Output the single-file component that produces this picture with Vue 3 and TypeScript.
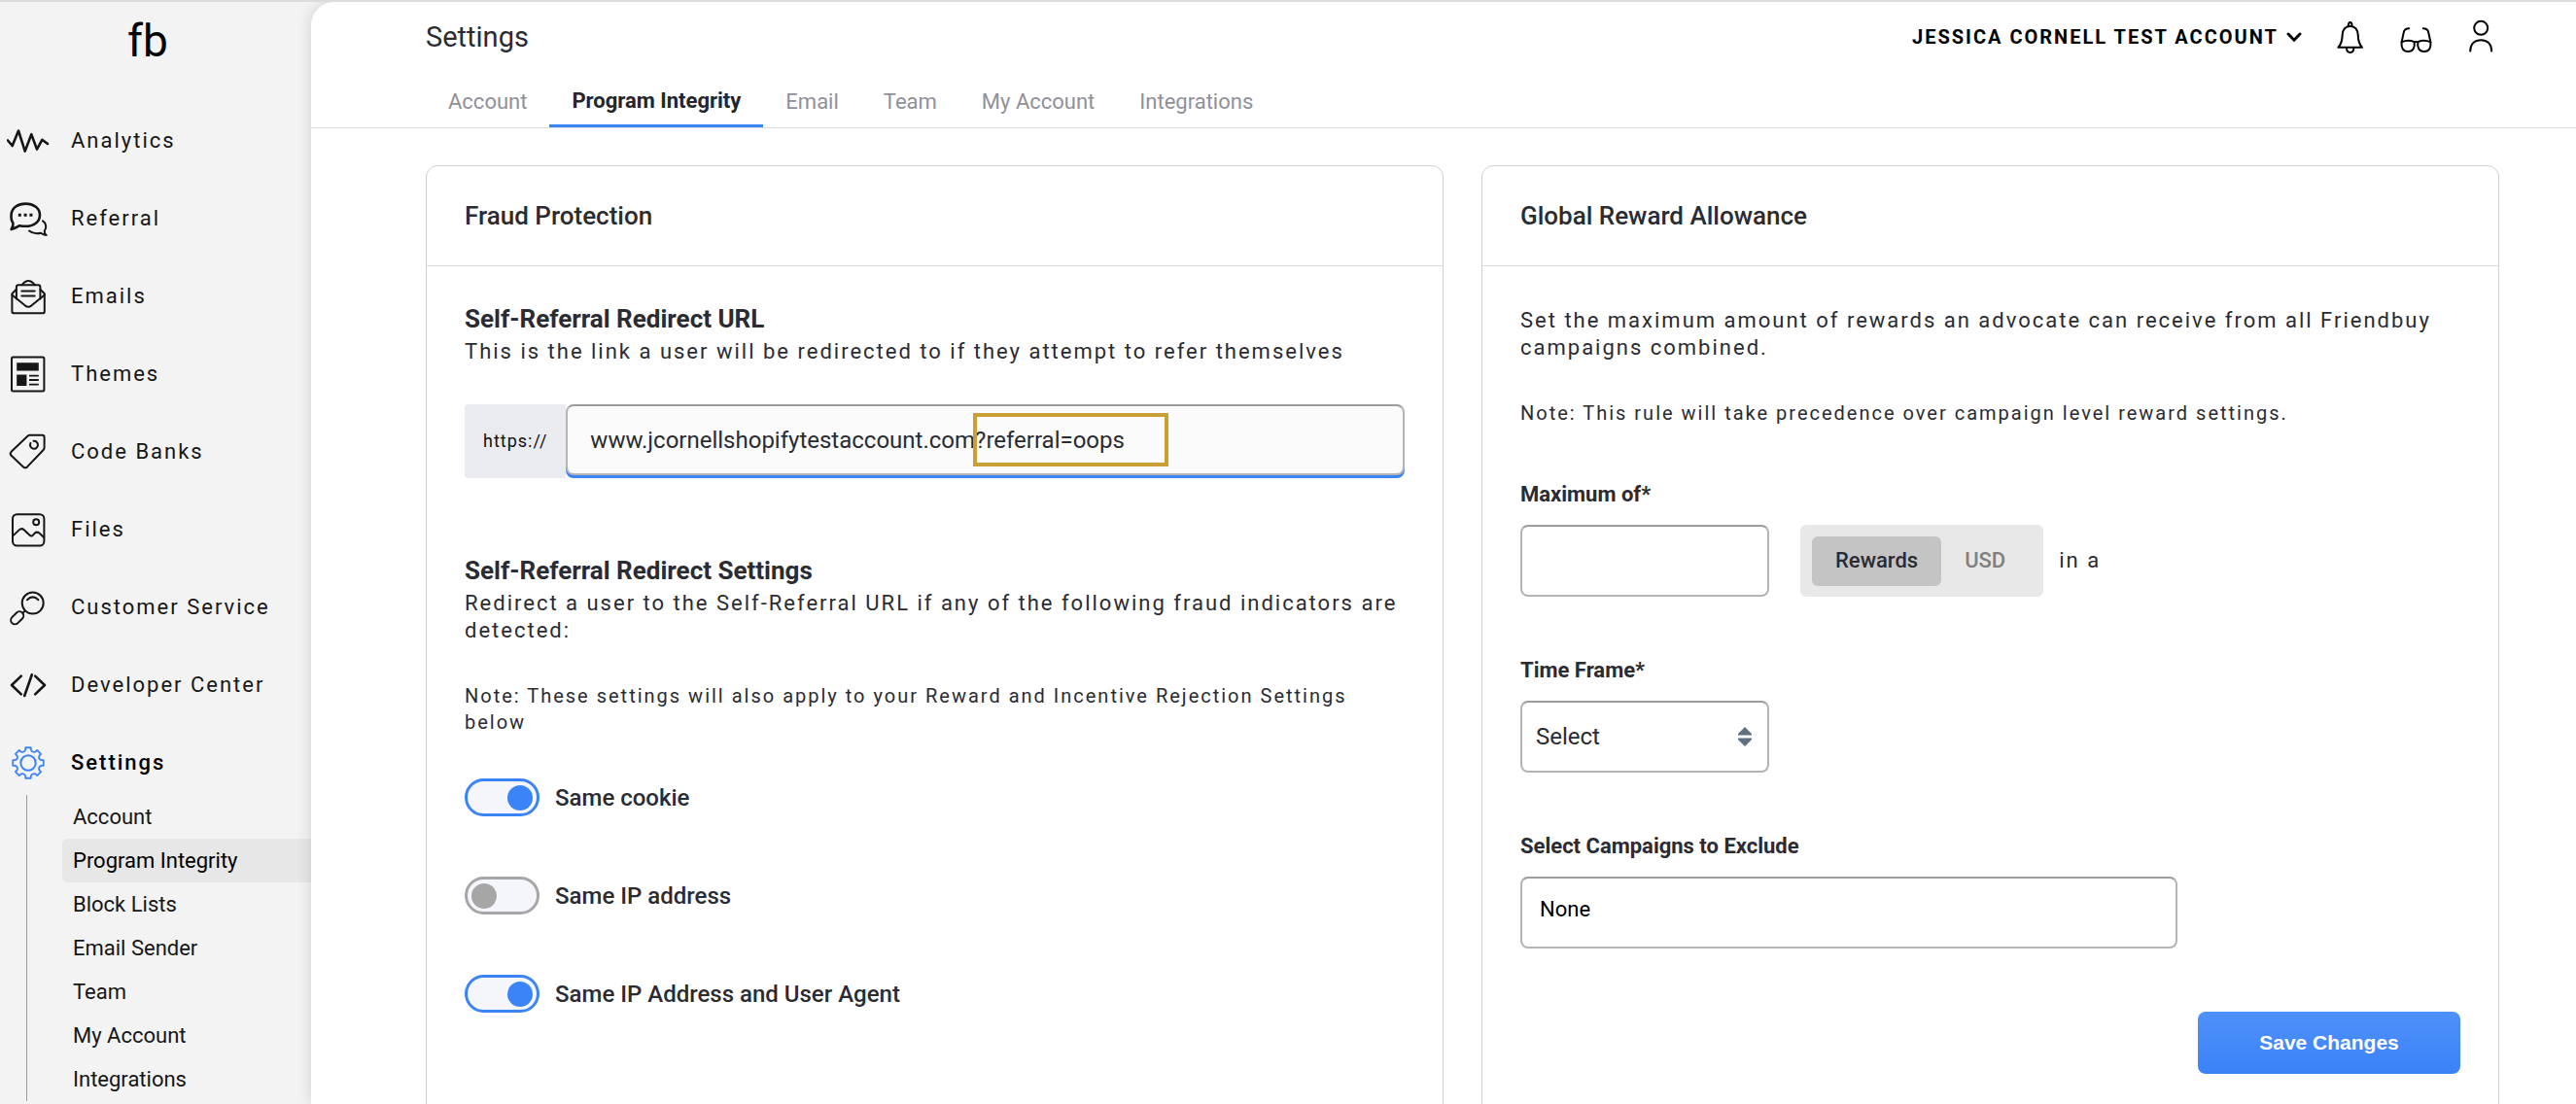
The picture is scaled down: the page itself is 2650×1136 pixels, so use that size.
<script setup lang="ts">
import { ref } from 'vue'

interface NavItem {
  label: string
  icon: string
}

const navItems: NavItem[] = [
  { label: 'Analytics', icon: 'analytics' },
  { label: 'Referral', icon: 'referral' },
  { label: 'Emails', icon: 'emails' },
  { label: 'Themes', icon: 'themes' },
  { label: 'Code Banks', icon: 'tag' },
  { label: 'Files', icon: 'files' },
  { label: 'Customer Service', icon: 'search' },
  { label: 'Developer Center', icon: 'code' },
  { label: 'Settings', icon: 'gear' },
]

const subItems: string[] = ['Account', 'Program Integrity', 'Block Lists', 'Email Sender', 'Team', 'My Account', 'Integrations']
const tabs: string[] = ['Account', 'Program Integrity', 'Email', 'Team', 'My Account', 'Integrations']
const activePage = 'Program Integrity'

const redirectUrl = ref('www.jcornellshopifytestaccount.com?referral=oops')
const maximum = ref('')
const unit = ref('Rewards')
const timeFrame = ref('')
const excluded = ref('None')
const indicators = ref([
  { id: 'cookie', label: 'Same cookie', on: true },
  { id: 'ip', label: 'Same IP address', on: false },
  { id: 'agent', label: 'Same IP Address and User Agent', on: true },
])

// Outline of the eight-toothed settings gear, centred on 22,22
function gearOutline(): string {
  const at = (deg: number, r: number): string => {
    const a = (deg * Math.PI) / 180
    return `${(22 + r * Math.cos(a)).toFixed(2)} ${(22 + r * Math.sin(a)).toFixed(2)}`
  }
  let d = ''
  for (let i = 0; i < 8; i++) {
    const c = i * 45
    d += `${i === 0 ? 'M' : 'L'}${at(c - 10, 16)}L${at(c + 10, 16)}L${at(c + 12, 13.6)}Q${at(c + 22.5, 11)} ${at(c + 33, 13.6)}`
  }
  return d + 'Z'
}
const gearPath = gearOutline()
</script>

<template>
  <div class="app">
    <aside class="sidebar">
      <a class="logo" href="#">fb</a>
      <nav>
        <ul class="nav">
          <li v-for="item in navItems" :key="item.label">
            <a class="nav-link" :class="{ current: item.icon === 'gear' }" href="#">
              <svg class="icon" viewBox="0 0 44 44" aria-hidden="true">
                <path v-if="item.icon === 'analytics'" stroke-width="2.6" d="M1 21.5 5.7 27 12 11.5 18.7 32.6 25.3 15.2 31 30.6 36.3 20.8 42 25" />
                <template v-else-if="item.icon === 'referral'">
                  <path stroke-width="2.6" d="M4.6 33 C6.4 30.6 6.8 28.6 6.4 26.6 C4.8 24.4 4.2 21.4 4.6 17.6 C5.2 10.6 11.6 6.6 19.2 6.6 C27.6 6.6 34 11.2 34 18.2 C34 25.4 27.6 29.8 19.2 29.8 C17 29.8 15 29.6 13.2 29.2 C10.6 30.8 8 32.2 4.6 33 Z" />
                  <path stroke-width="2" d="M37 24.4 C41 27 41 31.6 38.8 34.4 C38.6 36.6 39.4 38 40.8 39 C38.4 38.8 36.6 38 35 36.8 C30.6 37.8 26 37.2 23 34.6" />
                  <path stroke-width="3" stroke-linecap="butt" d="M11.8 18.2h3M17.6 18.2h3M23.4 18.2h3" />
                </template>
                <template v-else-if="item.icon === 'emails'">
                  <path d="M9.7 14.8 5.4 19.2V37.4Q5.4 39.2 7.2 39.2H37Q38.8 39.2 38.8 37.4V19.2L34.4 14.8" />
                  <path d="M9.9 24.4V12.4Q9.9 10.3 12 10.3H32.3Q34.4 10.3 34.4 12.4V24.4" />
                  <path d="M5.4 20.4 19 31.6Q22.1 33.8 25.2 31.6L38.8 20.4" />
                  <path d="M15.6 10.2Q22.1 2 28.8 10.2M15.3 16.6H28.7M15.3 21.6H28.7" />
                </template>
                <template v-else-if="item.icon === 'themes'">
                  <rect x="5" y="4.6" width="33.4" height="34.8" rx="1.5" />
                  <path class="solid" d="M10.2 10.2H32.8V18.6H10.2ZM10.2 22.4H20.4V34H10.2Z" />
                  <path stroke-linecap="butt" stroke-width="1.8" d="M23 23.6H32.8M23 28H32.8M23 32.6H32.8" />
                </template>
                <template v-else-if="item.icon === 'tag'">
                  <path d="M23.6 4.8H36.4Q38.6 4.8 38.6 7V17.6Q38.6 19 37.6 20L21 37.4Q19 39.2 17 37.4L4.6 25.8Q2.8 23.8 4.6 21.8L21.4 5.8Q22.4 4.8 23.6 4.8Z" />
                  <path d="M27.6 10.8A4 4 0 1 1 24.4 13" />
                </template>
                <template v-else-if="item.icon === 'files'">
                  <rect x="6" y="6.2" width="32.4" height="32.4" rx="4.5" />
                  <circle cx="30.2" cy="14.2" r="3" />
                  <path d="M6.3 28.4 12.6 22.4Q15.2 20 17.8 22.2L23.6 27.8Q25.4 29.6 27.4 27.2L28.6 25.8Q31 23.6 33.4 25.6L38.2 30" />
                </template>
                <template v-else-if="item.icon === 'search'">
                  <circle cx="26.7" cy="17.6" r="11" />
                  <path d="M21 14.2Q26.7 8.6 32.4 14.2M18.6 25.6 16.8 27.4" />
                  <rect x="3.2" y="28.6" width="15" height="8.4" rx="4.2" transform="rotate(-45 10.7 32.8)" />
                </template>
                <path v-else-if="item.icon === 'code'" stroke-width="2.6" d="M14.8 12.6 5 22 14.8 31.4M25.8 11.2 18.2 33M29.2 12.6 39 22 29.2 31.4" />
                <template v-else>
                  <path stroke-width="1.8" :d="gearPath" />
                  <circle cx="22" cy="22" r="7.7" />
                </template>
              </svg>
              <span>{{ item.label }}</span>
            </a>
          </li>
        </ul>
        <ul class="subnav">
          <li v-for="sub in subItems" :key="sub">
            <a class="sub-link" :class="{ selected: sub === activePage }" href="#">{{ sub }}</a>
          </li>
        </ul>
      </nav>
    </aside>

    <main class="main">
      <header class="header">
        <div class="topline">
          <h1>Settings</h1>
          <div class="tools">
            <button class="account" type="button">
              JESSICA CORNELL TEST ACCOUNT
              <svg class="chevron" viewBox="0 0 16 12" aria-hidden="true"><path d="M2 3 8 9.2 14 3" /></svg>
            </button>
            <button class="tool" type="button" aria-label="Notifications">
              <svg class="icon" viewBox="0 0 44 44" aria-hidden="true">
                <path d="M11.4 32.8C14.6 29.4 15.4 26.4 15.6 20.6C15.8 14.4 18.4 11 23.7 11C29 11 31.6 14.4 31.8 20.6C32 26.4 32.8 29.4 36 32.8Z" />
                <path d="M21.8 10.8C21.8 5.6 25.6 5.6 25.6 10.8M20 33C20 39.6 27.4 39.6 27.4 33" />
              </svg>
            </button>
            <button class="tool" type="button" aria-label="Preview">
              <svg class="icon" viewBox="0 0 44 44" aria-hidden="true">
                <path d="M8.6 27.4C12.6 25.6 17.6 25.4 21.6 27.2C22.6 32.8 20.4 37 15.2 37C9.8 37 8 32.8 8.6 27.4ZM25.4 27.2C29.4 25.4 34.4 25.6 38.4 27.4C39 32.8 37.2 37 31.8 37C26.6 37 24.4 32.8 25.4 27.2ZM21.6 27.4Q23.5 26.4 25.4 27.4" />
                <path d="M8.6 27.4 11 16.4Q12 13.4 16.2 13.2M38.4 27.4 36 16.4Q35 13.4 30.8 13.2" />
              </svg>
            </button>
            <button class="tool" type="button" aria-label="Profile">
              <svg class="icon" viewBox="0 0 44 44" aria-hidden="true">
                <circle cx="22.2" cy="12.8" r="7" />
                <path d="M11.2 36.6C11.4 29 16 25.2 22.2 25.2C28.4 25.2 33 29 33.2 36.6" />
              </svg>
            </button>
          </div>
        </div>
        <nav class="tabs">
          <a v-for="tab in tabs" :key="tab" class="tab" :class="{ active: tab === activePage }" href="#">{{ tab }}</a>
        </nav>
      </header>

      <div class="cards">
        <section class="card">
          <h2 class="card-title">Fraud Protection</h2>
          <div class="card-body">
            <h3><label for="redirect-url">Self-Referral Redirect URL</label></h3>
            <p class="text">This is the link a user will be redirected to if they attempt to refer themselves</p>
            <div class="url-row">
              <span class="prefix">https://</span>
              <div class="url-box">
                <input id="redirect-url" v-model="redirectUrl" class="field url" type="text" />
                <span class="marker"></span>
              </div>
            </div>
            <h3>Self-Referral Redirect Settings</h3>
            <p class="text">Redirect a user to the Self-Referral URL if any of the following fraud indicators are detected:</p>
            <p class="note">Note: These settings will also apply to your Reward and Incentive Rejection Settings below</p>
            <div class="toggles">
              <label v-for="row in indicators" :key="row.id" class="toggle">
                <input v-model="row.on" type="checkbox" role="switch" />
                <span>{{ row.label }}</span>
              </label>
            </div>
          </div>
        </section>

        <section class="card">
          <h2 class="card-title">Global Reward Allowance</h2>
          <form class="card-body" @submit.prevent>
            <p class="text">Set the maximum amount of rewards an advocate can receive from all Friendbuy campaigns combined.</p>
            <p class="note">Note: This rule will take precedence over campaign level reward settings.</p>
            <div class="group">
              <label class="label" for="maximum">Maximum of*</label>
              <div class="limit">
                <input id="maximum" v-model="maximum" class="field short" type="text" />
                <div class="units">
                  <button v-for="u in ['Rewards', 'USD']" :key="u" type="button" class="unit" :class="{ on: unit === u }" @click="unit = u">{{ u }}</button>
                </div>
                <span class="text">in a</span>
              </div>
            </div>
            <div class="group">
              <label class="label" for="time-frame">Time Frame*</label>
              <div class="select-box">
                <select id="time-frame" v-model="timeFrame" class="field short">
                  <option value="">Select</option>
                  <option value="day">Day</option>
                  <option value="month">Month</option>
                  <option value="year">Year</option>
                </select>
                <svg class="arrows" viewBox="0 0 14 20" aria-hidden="true"><path d="M7 0 14 7V8.4H0V7ZM7 20 14 13V11.6H0V13Z" /></svg>
              </div>
            </div>
            <div class="group">
              <label class="label" for="excluded">Select Campaigns to Exclude</label>
              <input id="excluded" v-model="excluded" class="field campaigns" type="text" />
            </div>
            <button class="save" type="submit">Save Changes</button>
          </form>
        </section>
      </div>
    </main>
  </div>
</template>

<style>
body {
  margin: 0;
  background: #f3f3f3;
}
</style>

<style scoped>
* {
  box-sizing: border-box;
}

.app {
  display: flex;
  height: 100vh;
  overflow: hidden;
  border-top: 2px solid #dcdcdc;
  background: #f3f3f3;
  color: #2a2b33;
  font-family: Roboto, "Liberation Sans", sans-serif;
  font-size: 22px;
  line-height: 28px;
}

h1, h2, h3, p, ul {
  margin: 0;
  padding: 0;
}

ul {
  list-style: none;
}

a {
  color: inherit;
  text-decoration: none;
}

button, input, select {
  margin: 0;
  font: inherit;
  color: inherit;
}

.icon {
  flex: none;
  width: 44px;
  height: 44px;
  fill: none;
  stroke: currentColor;
  stroke-width: 2;
  stroke-linecap: round;
  stroke-linejoin: round;
}

.solid {
  fill: currentColor;
  stroke: none;
}

.sidebar {
  flex: 0 0 320px;
  color: #161616;
}

.logo {
  display: block;
  height: 110px;
  padding: 13px 16px 0 0;
  color: #000;
  font-size: 46px;
  font-weight: 400;
  line-height: 54px;
  text-align: center;
}

.nav {
  display: flex;
  flex-direction: column;
  gap: 14px;
}

.nav-link {
  display: flex;
  align-items: center;
  gap: 22px;
  height: 66px;
  padding-left: 7px;
  letter-spacing: 2px;
}

.current {
  color: #000;
  font-weight: 500;
}

.current .icon {
  color: #3b84f7;
}

.subnav {
  margin-left: 27px;
  border-left: 1px solid #9b9b9b;
}

.sub-link {
  display: block;
  margin-left: 36px;
  padding-left: 11px;
  border-radius: 6px 0 0 6px;
  line-height: 45px;
}

.selected {
  background: #e7e7e7;
  color: #000;
}

.main {
  flex: 1;
  min-width: 0;
  border-top-left-radius: 24px;
  background: #fff;
  box-shadow: 0 0 16px rgba(0, 0, 0, 0.14);
}

.header {
  display: flex;
  flex-direction: column;
  justify-content: space-between;
  height: 130px;
  padding: 14px 76px 0 118px;
  border-bottom: 1px solid #dcdcdc;
}

.topline {
  display: flex;
  align-items: center;
  justify-content: space-between;
}

h1 {
  font-size: 29px;
  font-weight: 400;
}

.tools {
  display: flex;
  align-items: center;
  gap: 24px;
}

.tool, .account {
  display: flex;
  align-items: center;
  padding: 0;
  border: 0;
  background: none;
  color: #000;
}

.account {
  gap: 8px;
  margin-right: 2px;
  font-size: 20px;
  font-weight: 700;
  letter-spacing: 2px;
}

.chevron {
  width: 16px;
  height: 12px;
  fill: none;
  stroke: currentColor;
  stroke-width: 3;
  stroke-linecap: round;
}

.tabs {
  display: flex;
  align-items: flex-end;
}

.tab {
  padding: 0 23px 12px;
  color: #8f909a;
}

.active {
  padding-bottom: 10px;
  border-bottom: 3px solid #3b84f7;
  color: #25262d;
  font-weight: 700;
}

.cards {
  display: grid;
  grid-template-columns: 1fr 1fr;
  gap: 39px;
  padding: 38px 79px 80px 118px;
}

.card {
  border: 1px solid #d0d0d2;
  border-radius: 12px;
  padding-bottom: 80px;
}

.card-title {
  padding: 0 39px;
  border-bottom: 1px solid #d8dae2;
  font-size: 26px;
  font-weight: 500;
  line-height: 102px;
}

.card-body {
  display: flex;
  flex-direction: column;
  padding: 38px 39px 0;
}

h3 {
  font-size: 26px;
  font-weight: 700;
  line-height: 32px;
}

.text {
  padding-top: 4px;
  letter-spacing: 2px;
}

.note {
  margin-top: 40px;
  font-size: 20px;
  line-height: 27px;
  letter-spacing: 2px;
}

.url-row {
  display: flex;
  height: 76px;
  margin: 40px 0 79px;
}

.prefix {
  display: flex;
  align-items: center;
  padding: 0 19px;
  border-radius: 4px 0 0 4px;
  background: #eaebef;
  color: #111;
  font-size: 18px;
  letter-spacing: 1px;
}

.url-box, .select-box {
  position: relative;
}

.url-box {
  flex: 1;
}

.field {
  width: 100%;
  height: 74px;
  border: 2px solid #b4b4b4;
  border-top-color: #9c9c9c;
  border-radius: 8px;
  background: #fff;
  font-size: 24px;
  outline: none;
}

.url {
  display: block;
  height: 73px;
  padding: 0 23px;
  background: #fbfbfb;
  box-shadow: 0 3px 0 #3b84f7;
}

.marker {
  position: absolute;
  top: 9px;
  left: 419px;
  width: 201px;
  height: 55px;
  border: 4px solid #c99f36;
  pointer-events: none;
}

.toggles {
  display: flex;
  flex-direction: column;
  gap: 62px;
  margin-top: 44px;
}

.toggle {
  display: flex;
  align-items: center;
  gap: 16px;
  font-size: 24px;
  font-weight: 500;
}

.toggle input {
  appearance: none;
  display: flex;
  align-items: center;
  width: 77px;
  height: 39px;
  padding: 0 4px;
  border: 3px solid #a6a6a6;
  border-radius: 20px;
  background: #f4f6fb;
}

.toggle input::before {
  content: "";
  width: 26px;
  height: 26px;
  border-radius: 50%;
  background: #a6a6a6;
}

.toggle input:checked {
  justify-content: flex-end;
  border-color: #3b84f7;
}

.toggle input:checked::before {
  background: #3b84f7;
}

.group {
  display: flex;
  flex-direction: column;
  align-items: flex-start;
  gap: 18px;
  margin-top: 63px;
}

.note + .group {
  margin-top: 57px;
}

.label {
  font-weight: 700;
  line-height: 26px;
}

.limit {
  display: flex;
  align-items: center;
}

.short {
  width: 256px;
  padding: 0 14px;
}

.units {
  display: flex;
  align-items: center;
  height: 74px;
  margin: 0 16px 0 32px;
  padding: 0 15px 0 12px;
  border-radius: 6px;
  background: #e8e8e8;
}

.unit {
  height: 51px;
  padding: 0 24px;
  border: 0;
  border-radius: 6px;
  background: none;
  color: #808080;
  font-weight: 500;
}

.on {
  background: #c4c4c4;
  color: #2a2b33;
}

.limit .text {
  padding: 0;
}

select {
  appearance: none;
  display: block;
}

.arrows {
  position: absolute;
  top: 27px;
  right: 18px;
  width: 14px;
  height: 20px;
  fill: #5f7081;
  pointer-events: none;
}

.campaigns {
  width: 676px;
  padding: 0 18px 8px;
  color: #000;
  font-size: 22px;
}

.save {
  align-self: flex-end;
  width: 270px;
  height: 64px;
  margin-top: 65px;
  border: 0;
  border-radius: 8px;
  background: linear-gradient(#4f91fa, #3a82f8);
  color: #fff;
  font-family: "Liberation Sans", sans-serif;
  font-size: 21px;
  font-weight: 700;
}
</style>
